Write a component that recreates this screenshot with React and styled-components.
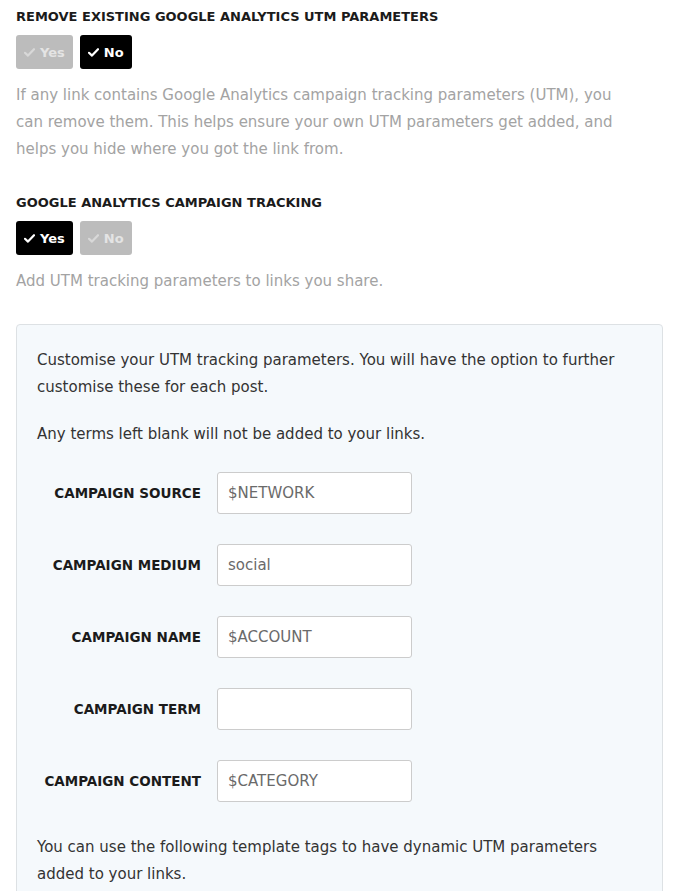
import React from 'react';
import styled, { createGlobalStyle } from 'styled-components';

const GlobalStyle = createGlobalStyle`
  body {
    margin: 0;
    background: #ffffff;
    font-family: "DejaVu Sans", "Liberation Sans", sans-serif;
  }
`;

const Page = styled.div`
  padding: 8px 11px 0 16px;
`;

const Section = styled.div`
  margin-bottom: 31px;
`;

const Title = styled.h3`
  margin: 0 0 10px;
  font-size: 13px;
  font-weight: bold;
  color: #1b1b1b;
  text-transform: uppercase;
  line-height: 17px;
`;

const Toggle = styled.div`
  display: flex;
  gap: 7px;
`;

const ToggleButton = styled.button`
  display: flex;
  align-items: center;
  gap: 5px;
  height: 34px;
  padding: 0 8px;
  border: none;
  border-radius: 3px;
  background: ${p => (p.$active ? '#000000' : '#bcbcbc')};
  color: ${p => (p.$active ? '#ffffff' : '#e4e4e4')};
  font-family: inherit;
  font-size: 13px;
  font-weight: bold;
`;

const Check = ({ color }) => (
  <svg width="11" height="9" viewBox="0 0 11 9">
    <path d="M1 4.8 L4 7.6 L10 1.2" fill="none" stroke={color} strokeWidth="2.2" strokeLinecap="round" strokeLinejoin="round" />
  </svg>
);

const Help = styled.p`
  max-width: 618px;
  margin: 13px 0 0;
  font-size: 15px;
  line-height: 27px;
  color: #a3a3a3;
`;

const Panel = styled.div`
  margin-top: 29px;
  padding: 22px 20px 0;
  background: #f5f9fc;
  border: 1px solid #dde1e4;
  border-radius: 4px;
`;

const PanelText = styled.p`
  margin: 0 0 20px;
  font-size: 15px;
  line-height: 27px;
  color: #333333;
`;

const Fields = styled.div`
  display: grid;
  grid-template-columns: 164px 195px;
  column-gap: 16px;
  row-gap: 30px;
  align-items: center;
  margin: 24px 0 32px;
`;

const Label = styled.label`
  text-align: right;
  font-size: 13.5px;
  font-weight: bold;
  color: #1b1b1b;
  text-transform: uppercase;
`;

const Input = styled.input`
  box-sizing: border-box;
  width: 195px;
  height: 42px;
  padding: 0 10px;
  background: #ffffff;
  border: 1px solid #cccccc;
  border-radius: 3px;
  font-family: inherit;
  font-size: 15px;
  color: #6a6a6a;
  outline: none;
`;

const fields = [
  ['Campaign Source', '$NETWORK'],
  ['Campaign Medium', 'social'],
  ['Campaign Name', '$ACCOUNT'],
  ['Campaign Term', ''],
  ['Campaign Content', '$CATEGORY'],
];

const YesNo = ({ value }) => (
  <Toggle>
    <ToggleButton $active={value}>
      <Check color={value ? '#fff' : '#d8d8d8'} />Yes
    </ToggleButton>
    <ToggleButton $active={!value}>
      <Check color={!value ? '#fff' : '#d8d8d8'} />No
    </ToggleButton>
  </Toggle>
);

export default function App() {
  return (
    <Page>
      <GlobalStyle />
      <Section>
        <Title>Remove existing Google Analytics UTM parameters</Title>
        <YesNo value={false} />
        <Help>
          If any link contains Google Analytics campaign tracking parameters (UTM), you
          can remove them. This helps ensure your own UTM parameters get added, and
          helps you hide where you got the link from.
        </Help>
      </Section>
      <Section>
        <Title>Google Analytics campaign tracking</Title>
        <YesNo value={true} />
        <Help>Add UTM tracking parameters to links you share.</Help>
        <Panel>
          <PanelText>
            Customise your UTM tracking parameters. You will have the option to further
            customise these for each post.
          </PanelText>
          <PanelText>Any terms left blank will not be added to your links.</PanelText>
          <Fields>
            {fields.map(([label, value]) => (
              <React.Fragment key={label}>
                <Label>{label}</Label>
                <Input defaultValue={value} />
              </React.Fragment>
            ))}
          </Fields>
          <PanelText>
            You can use the following template tags to have dynamic UTM parameters
            added to your links.
          </PanelText>
        </Panel>
      </Section>
    </Page>
  );
}
